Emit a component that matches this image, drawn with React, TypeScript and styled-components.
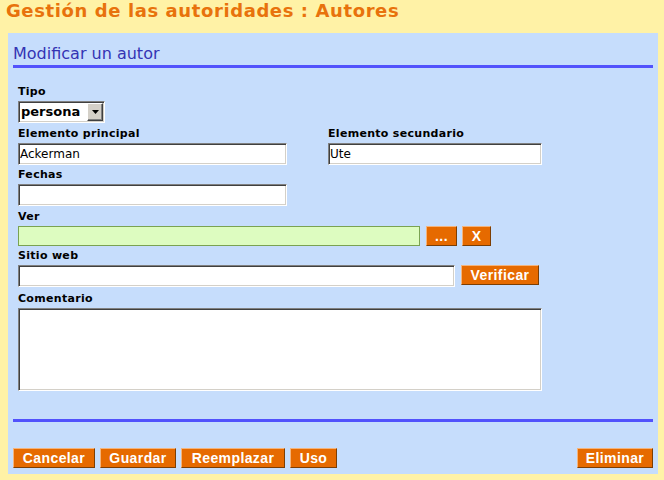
import React from "react";
import styled, { createGlobalStyle } from "styled-components";

const GlobalStyle = createGlobalStyle`
  html, body { margin: 0; padding: 0; background: #fff2a6; }
  body { font-family: "DejaVu Sans", Verdana, sans-serif; }
  * { box-sizing: border-box; }
`;

const Page = styled.div`
  width: 664px;
  height: 480px;
  background: #fff2a6;
  display: flex;
  flex-direction: column;
`;

const Title = styled.h1`
  margin: 0;
  padding: 0 0 11px 6px;
  font: bold 18px/22px "DejaVu Sans", Verdana, sans-serif;
  letter-spacing: 0.6px;
  color: #e8720c;
`;

const Panel = styled.section`
  margin-left: 8px;
  width: 650px;
  height: 441px;
  background: #c6ddfc;
  padding: 11px 5px 5px 5px;
  display: flex;
  flex-direction: column;
`;

const Heading = styled.h2`
  margin: 0;
  font: normal 16px/19px "DejaVu Sans", Verdana, sans-serif;
  color: #3434b4;
`;

const Rule = styled.div<{ $mt: number }>`
  height: 3px;
  margin-top: ${(p) => p.$mt}px;
  background: #5252fc;
`;

const Form = styled.div`
  display: flex;
  flex-direction: column;
  padding: 17px 0 0 5px;
`;

const Row = styled.div<{ $mt?: number }>`
  display: flex;
  gap: 41px;
  margin-top: ${(p) => p.$mt ?? 0}px;
`;

const Field = styled.div<{ $mt?: number }>`
  display: flex;
  flex-direction: column;
  margin-top: ${(p) => p.$mt ?? 0}px;
`;

const Label = styled.label`
  display: block;
  height: 13px;
  margin-bottom: 3px;
  font: bold 11px/13px "DejaVu Sans", Verdana, sans-serif;
  letter-spacing: 0.3px;
  color: #000;
  white-space: nowrap;
`;

const Controls = styled.div`
  display: flex;
  align-items: flex-start;
`;

const SelectBox = styled.div`
  display: inline-flex;
  align-items: center;
  justify-content: space-between;
  width: 87px;
  height: 22px;
  background: #fff;
  border: 1px solid;
  border-color: #808080 #ffffff #ffffff #808080;
  box-shadow: inset 1px 1px #404040, inset -1px -1px #d4d0c8;
  padding: 1px 1px 1px 2px;
`;

const SelectValue = styled.span`
  font: bold 13px/16px "DejaVu Sans", Verdana, sans-serif;
  color: #000;
`;

const SelectArrow = styled.span`
  width: 16px;
  height: 18px;
  display: flex;
  align-items: center;
  justify-content: center;
  background: #d4d0c8;
  border: 1px solid;
  border-color: #ffffff #404040 #404040 #ffffff;
  box-shadow: inset -1px -1px #808080;
`;

const TextInput = styled.input<{ $w: number; $h?: number }>`
  width: ${(p) => p.$w}px;
  height: ${(p) => p.$h ?? 22}px;
  margin: 0;
  padding: 0 1px;
  background: #fff;
  border: 1px solid;
  border-color: #808080 #ffffff #ffffff #808080;
  box-shadow: inset 1px 1px #404040, inset -1px -1px #d4d0c8;
  font: 12px/16px "DejaVu Sans", Verdana, sans-serif;
  color: #000;
  outline: none;
`;

const LinkInput = styled.input<{ $w: number }>`
  width: ${(p) => p.$w}px;
  height: 20px;
  margin: 0;
  padding: 0 2px;
  background: #ddfcc0;
  border: 1px solid #7aa252;
  font: 12px/16px "DejaVu Sans", Verdana, sans-serif;
  outline: none;
`;

const TextArea = styled.textarea`
  width: 524px;
  height: 83px;
  margin: 0;
  padding: 2px;
  resize: none;
  background: #fff;
  border: 1px solid;
  border-color: #808080 #ffffff #ffffff #808080;
  box-shadow: inset 1px 1px #404040, inset -1px -1px #d4d0c8;
  font: 12px/16px "DejaVu Sans", Verdana, sans-serif;
  outline: none;
  display: block;
`;

const OrangeButton = styled.button<{ $w: number; $ml?: number }>`
  width: ${(p) => p.$w}px;
  height: 20px;
  margin: 0 0 0 ${(p) => p.$ml ?? 0}px;
  padding: 0;
  flex: none;
  background: #e66a00;
  color: #fff;
  font: bold 14px/16px "Liberation Sans", Arial, sans-serif;
  letter-spacing: 0.4px;
  text-align: center;
  border: 1px solid;
  border-color: #f4b47c #7c3e04 #7c3e04 #f4b47c;
  cursor: pointer;
`;

const BottomBar = styled.div`
  display: flex;
  gap: 5px;
  margin-top: 26px;
`;

const Spacer = styled.div`
  flex: 1;
`;

export default function App() {
  return (
    <Page>
      <GlobalStyle />
      <Title>Gestión de las autoridades : Autores</Title>
      <Panel>
        <Heading>Modificar un autor</Heading>
        <Rule $mt={2} />
        <Form>
          <Field>
            <Label>Tipo</Label>
            <Controls>
              <SelectBox>
                <SelectValue>persona</SelectValue>
                <SelectArrow>
                  <svg width="7" height="4" viewBox="0 0 7 4">
                    <path d="M0 0h7L3.5 4z" fill="#000" />
                  </svg>
                </SelectArrow>
              </SelectBox>
            </Controls>
          </Field>
          <Row $mt={4}>
            <Field>
              <Label>Elemento principal</Label>
              <TextInput $w={269} defaultValue="Ackerman" />
            </Field>
            <Field>
              <Label>Elemento secundario</Label>
              <TextInput $w={214} defaultValue="Ute" />
            </Field>
          </Row>
          <Field $mt={3}>
            <Label>Fechas</Label>
            <TextInput $w={269} defaultValue="" />
          </Field>
          <Field $mt={4}>
            <Label>Ver</Label>
            <Controls>
              <LinkInput $w={402} defaultValue="" />
              <OrangeButton $w={31} $ml={6}>...</OrangeButton>
              <OrangeButton $w={29} $ml={5}>X</OrangeButton>
            </Controls>
          </Field>
          <Field $mt={3}>
            <Label>Sitio web</Label>
            <Controls>
              <TextInput $w={437} defaultValue="" />
              <OrangeButton $w={78} $ml={6}>Verificar</OrangeButton>
            </Controls>
          </Field>
          <Field $mt={5}>
            <Label>Comentario</Label>
            <TextArea defaultValue="" />
          </Field>
        </Form>
        <Rule $mt={28} />
        <BottomBar>
          <OrangeButton $w={82}>Cancelar</OrangeButton>
          <OrangeButton $w={76}>Guardar</OrangeButton>
          <OrangeButton $w={104}>Reemplazar</OrangeButton>
          <OrangeButton $w={47}>Uso</OrangeButton>
          <Spacer />
          <OrangeButton $w={76}>Eliminar</OrangeButton>
        </BottomBar>
      </Panel>
    </Page>
  );
}
